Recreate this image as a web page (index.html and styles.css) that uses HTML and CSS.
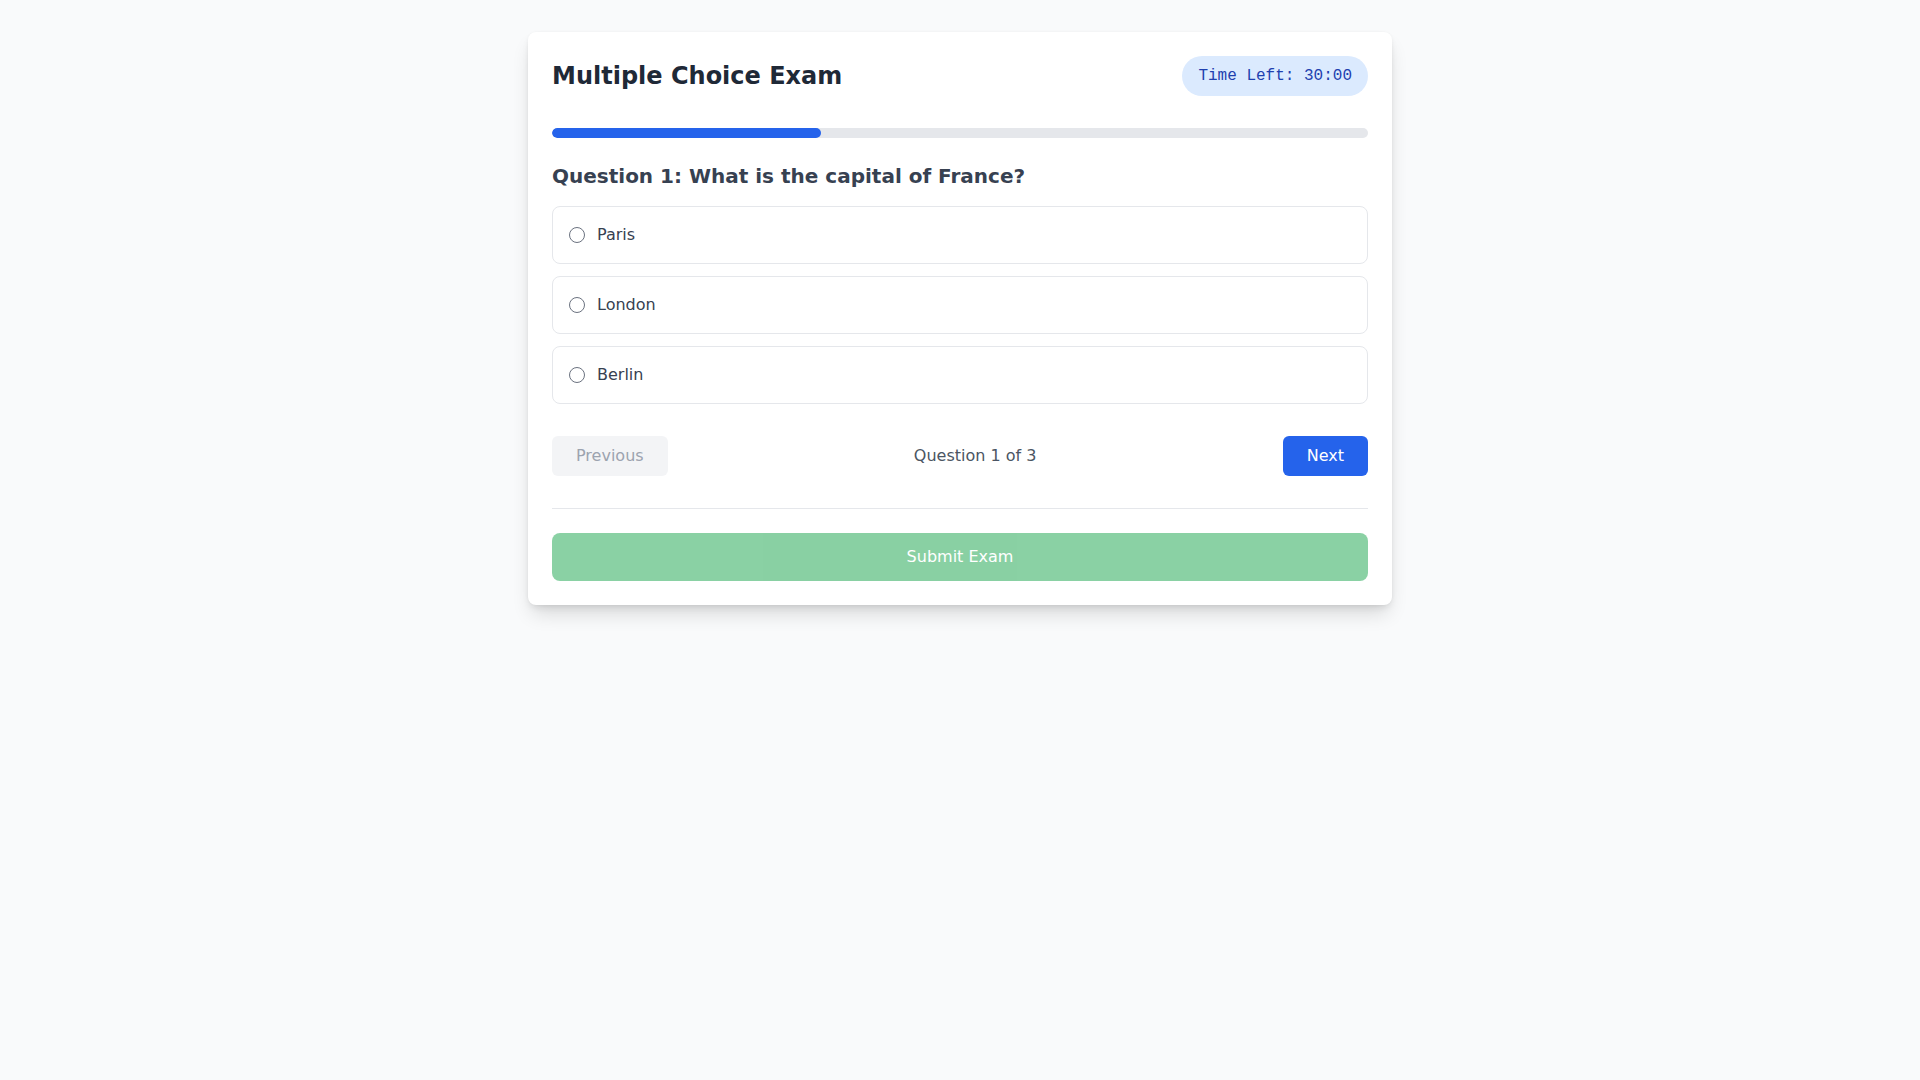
FILE: index.html
```html
<!DOCTYPE html>
<html lang="en">
<head>
<meta charset="utf-8">
<title>Multiple Choice Exam</title>
<link rel="stylesheet" href="styles.css">
</head>
<body>
<main class="card">
  <header class="header">
    <h1 class="title">Multiple Choice Exam</h1>
    <div class="timer">Time Left: 30:00</div>
  </header>
  <div class="progress"><div class="progress-fill" style="width: 33%"></div></div>
  <h2 class="question">Question 1: What is the capital of France?</h2>
  <div class="options">
    <label class="option"><input type="radio" name="q1" class="radio"><span class="option-text">Paris</span></label>
    <label class="option"><input type="radio" name="q1" class="radio"><span class="option-text">London</span></label>
    <label class="option"><input type="radio" name="q1" class="radio"><span class="option-text">Berlin</span></label>
  </div>
  <nav class="nav">
    <button class="btn btn-prev" disabled>Previous</button>
    <span class="counter">Question 1 of 3</span>
    <button class="btn btn-next">Next</button>
  </nav>
  <div class="submit-wrap">
    <button class="submit" disabled>Submit Exam</button>
  </div>
</main>
</body>
</html>
```
FILE: styles.css
```css
* { box-sizing: border-box; }
html, body { margin: 0; padding: 0; }
body {
  background: #f9fafb;
  font-family: "DejaVu Sans", sans-serif;
  font-size: 16px;
  line-height: 24px;
  color: #1f2937;
  padding-top: 32px;
  min-height: 1080px;
}
.card {
  width: 864px;
  margin: 0 auto;
  background: #ffffff;
  border-radius: 8px;
  padding: 24px;
  box-shadow: 0 12px 20px -4px rgba(0,0,0,0.14), 0 4px 8px -3px rgba(0,0,0,0.12), 0 0 3px rgba(0,0,0,0.04);
}
.header {
  display: flex;
  justify-content: space-between;
  align-items: center;
  margin-bottom: 32px;
}
.title {
  margin: 0;
  font-size: 24px;
  line-height: 32px;
  font-weight: 700;
  color: #1f2937;
}
.timer {
  background: #dbeafe;
  color: #1e40af;
  font-family: "Liberation Mono", monospace;
  font-size: 16px;
  line-height: 24px;
  padding: 8px 16px;
  border-radius: 9999px;
}
.progress {
  height: 10px;
  background: #e5e7eb;
  border-radius: 9999px;
  margin-bottom: 24px;
  overflow: hidden;
}
.progress-fill {
  height: 100%;
  background: #2563eb;
  border-radius: 9999px;
}
.question {
  margin: 0 0 16px;
  font-size: 20px;
  line-height: 28px;
  font-weight: 700;
  color: #374151;
}
.options {
  display: flex;
  flex-direction: column;
  gap: 12px;
}
.option {
  display: flex;
  align-items: center;
  padding: 16px;
  border: 1px solid #e5e7eb;
  border-radius: 8px;
  cursor: pointer;
}
.radio {
  appearance: none;
  -webkit-appearance: none;
  margin: 0;
  width: 16px;
  height: 16px;
  border: 1px solid #6b7280;
  border-radius: 50%;
  background: #fff;
  flex-shrink: 0;
}
.option-text {
  margin-left: 12px;
  color: #374151;
}
.nav {
  display: flex;
  justify-content: space-between;
  align-items: center;
  margin-top: 32px;
}
.btn {
  font-family: "DejaVu Sans", sans-serif;
  font-size: 16px;
  line-height: 24px;
  padding: 8px 24px;
  border: none;
  border-radius: 6px;
}
.btn-prev {
  background: #f3f4f6;
  color: #9ca3af;
}
.btn-next {
  background: #2563eb;
  color: #ffffff;
}
.counter {
  color: #4b5563;
}
.submit-wrap {
  margin-top: 32px;
  padding-top: 24px;
  border-top: 1px solid #e5e7eb;
}
.submit {
  display: block;
  width: 100%;
  font-family: "DejaVu Sans", sans-serif;
  font-size: 16px;
  line-height: 24px;
  padding: 12px;
  border: none;
  border-radius: 8px;
  background: #16a34a;
  color: #ffffff;
  opacity: 0.5;
}
```
